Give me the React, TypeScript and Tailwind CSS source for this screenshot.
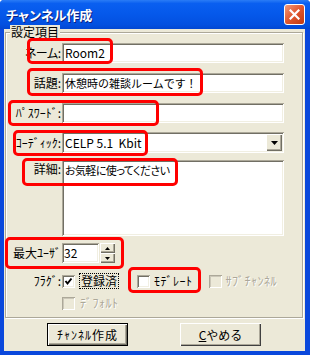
import type { ReactNode } from "react";

const jp = "font-['Noto_Sans_CJK_JP',sans-serif]";
const sunken =
  "bg-white shadow-[inset_1px_1px_0_#aca899,inset_-1px_-1px_0_#fff,inset_2px_2px_0_#716f64,inset_-2px_-2px_0_#f1efe2]";
const raised =
  "bg-[#ece9d8] shadow-[inset_1px_1px_0_#fff,inset_-1px_-1px_0_#716f64,inset_-2px_-2px_0_#aca899]";
const disabledText = "text-[#aca899] [text-shadow:1px_1px_0_#fff]";

function Label({ children, top }: { children: ReactNode; top?: boolean }) {
  return (
    <div
      className={`w-[56px] shrink-0 pr-[1px] text-right text-[12px] leading-[14px] whitespace-nowrap [font-feature-settings:'palt'] ${top ? "pt-[2px]" : "self-center"}`}
    >
      {children}
    </div>
  );
}

function Check({ checked, disabled }: { checked?: boolean; disabled?: boolean }) {
  return (
    <div
      className={`flex h-[13px] w-[13px] shrink-0 items-center justify-center ${
        disabled
          ? "bg-[#ece9d8] shadow-[inset_1px_1px_0_#aca899,inset_-1px_-1px_0_#fff,inset_2px_2px_0_#cbc7b8]"
          : sunken
      }`}
    >
      {checked && (
        <svg width="9" height="9" viewBox="0 0 9 9">
          <path d="M1.5 4 L3.5 6.5 L7.5 1.5" fill="none" stroke="#000" strokeWidth="2" />
        </svg>
      )}
    </div>
  );
}

function RedBox({ className }: { className: string }) {
  return <div className={`pointer-events-none absolute rounded-[5px] border-[3px] border-[#ff0000] ${className}`} />;
}

export default function App() {
  return (
    <div className={`relative flex h-[355px] w-[310px] flex-col overflow-hidden rounded-t-[4px] bg-[#0a48dc] text-black ${jp}`}>
      {/* title bar */}
      <div className="flex h-[29px] shrink-0 items-center justify-between bg-[linear-gradient(180deg,#2a7cf6_0%,#0a5ff0_12%,#0558ea_50%,#0350e0_85%,#0247d2_100%)] pl-[6px] pr-[5px]">
        <span className="text-[13px] font-bold leading-[16px] text-white [font-feature-settings:'palt'] [text-shadow:1px_1px_0_#0a1f80]">
          チャンネル作成
        </span>
        <div className="flex h-[21px] w-[21px] items-center justify-center rounded-[3px] border border-white bg-[linear-gradient(135deg,#f29a7a_0%,#e0562e_50%,#c2390f_100%)]">
          <svg width="11" height="11" viewBox="0 0 11 11">
            <path d="M1.5 1.5 L9.5 9.5 M9.5 1.5 L1.5 9.5" stroke="#fff" strokeWidth="2.2" strokeLinecap="square" />
          </svg>
        </div>
      </div>

      {/* body */}
      <div className="mb-[4px] ml-[4px] mr-[5px] flex flex-1 flex-col bg-[#ece9d8]">
        <div className="relative ml-[1px] mr-[2px] mt-[3px] border border-[#aca899] pb-[7px] shadow-[1px_1px_0_#fff,inset_1px_1px_0_#fff]">
          <span className="absolute -top-[8px] left-[4px] bg-[#ece9d8] px-[1px] text-[12px] leading-[14px]">設定項目</span>

          <div className="flex flex-col">
            <div className="mt-[10px] flex">
              <Label>
                <span className="tracking-[-0.5px]">ネーム</span>:
              </Label>
              <div className={`flex h-[20px] w-[222px] items-center pl-[3px] text-[12px] ${sunken}`}>Room2</div>
            </div>
            <div className="mt-[10px] flex">
              <Label>話題:</Label>
              <div className={`flex h-[20px] w-[222px] items-center pl-[3px] text-[11px] ${sunken}`}>
                休憩時の雑談ルームです！
              </div>
            </div>
            <div className="mt-[10px] flex">
              <Label>ﾊﾟｽﾜｰﾄﾞ:</Label>
              <div className={`h-[20px] w-[222px] ${sunken}`} />
            </div>
            <div className="mt-[9px] flex">
              <Label>ｺｰﾃﾞｨｯｸ:</Label>
              <div className={`flex h-[21px] w-[222px] items-center justify-between pl-[3px] pr-[2px] text-[12px] ${sunken}`}>
                <span className="whitespace-pre">CELP 5.1  Kbit</span>
                <div className={`flex h-[17px] w-[16px] items-center justify-center ${raised}`}>
                  <svg width="7" height="4" viewBox="0 0 7 4">
                    <path d="M0 0 H7 L3.5 4 Z" fill="#000" />
                  </svg>
                </div>
              </div>
            </div>
            <div className="mt-[7px] flex">
              <Label top>詳細:</Label>
              <div className={`h-[76px] w-[222px] pl-[3px] pt-[2px] text-[11px] leading-[16px] tracking-[-0.6px] [font-feature-settings:'palt'] ${sunken}`}>
                お気軽に使ってください
              </div>
            </div>
            <div className="mt-[7px] flex">
              <Label>最大ﾕｰｻﾞ</Label>
              <div className={`flex h-[20px] w-[37px] items-center pl-[2px] text-[12px] ${sunken}`}>32</div>
              <div className="ml-[1px] flex w-[15px] flex-col">
                <div className={`flex h-[10px] items-center justify-center ${raised}`}>
                  <svg width="5" height="3" viewBox="0 0 5 3">
                    <path d="M0 3 H5 L2.5 0 Z" fill="#000" />
                  </svg>
                </div>
                <div className={`flex h-[10px] items-center justify-center ${raised}`}>
                  <svg width="5" height="3" viewBox="0 0 5 3">
                    <path d="M0 0 H5 L2.5 3 Z" fill="#000" />
                  </svg>
                </div>
              </div>
            </div>

            <div className="mt-[11px] flex h-[14px] items-center text-[12px] leading-[14px]">
              <Label>ﾌﾗｸﾞ:</Label>
              <Check checked />
              <span className="ml-[4px] border border-dotted border-black px-[1px]">登録済</span>
              <div className="ml-[18px]">
                <Check />
              </div>
              <span className="ml-[4px] tracking-[0.5px]">ﾓﾃﾞﾚｰﾄ</span>
              <div className="ml-[16px]">
                <Check disabled />
              </div>
              <span className={`ml-[4px] tracking-[0.5px] ${disabledText}`}>ｻﾌﾞﾁｬﾝﾈﾙ</span>
            </div>
            <div className="mt-[8px] flex h-[14px] items-center text-[12px] leading-[14px]">
              <div className="w-[56px] shrink-0" />
              <Check disabled />
              <span className={`ml-[5px] tracking-[0.5px] ${disabledText}`}>ﾃﾞﾌｫﾙﾄ</span>
            </div>
          </div>
        </div>

        <div className="mt-[5px] flex pl-[43px]">
          <button className="h-[23px] w-[81px] border border-black bg-[#ece9d8] p-0 text-[12px] tracking-[1px] shadow-[inset_1px_1px_0_#fff,inset_-1px_-1px_0_#716f64,inset_-2px_-2px_0_#aca899]">
            ﾁｬﾝﾈﾙ作成
          </button>
          <button className={`ml-[52px] h-[23px] w-[81px] text-[12px] ${raised} shadow-[inset_1px_1px_0_#fff,inset_-1px_-1px_0_#404040,inset_-2px_-2px_0_#aca899]`}>
            <span className="underline">C</span>やめる
          </button>
        </div>
      </div>

      {/* annotation boxes */}
      <RedBox className="left-[27px] top-[38px] h-[26px] w-[86px]" />
      <RedBox className="left-[27px] top-[68px] h-[28px] w-[176px]" />
      <RedBox className="left-[8px] top-[100px] h-[26px] w-[151px]" />
      <RedBox className="left-[13px] top-[130px] h-[26px] w-[135px]" />
      <RedBox className="left-[22px] top-[158px] h-[28px] w-[156px]" />
      <RedBox className="left-[5px] top-[237px] h-[32px] w-[119px]" />
      <RedBox className="left-[128px] top-[267px] h-[26px] w-[73px]" />
    </div>
  );
}
